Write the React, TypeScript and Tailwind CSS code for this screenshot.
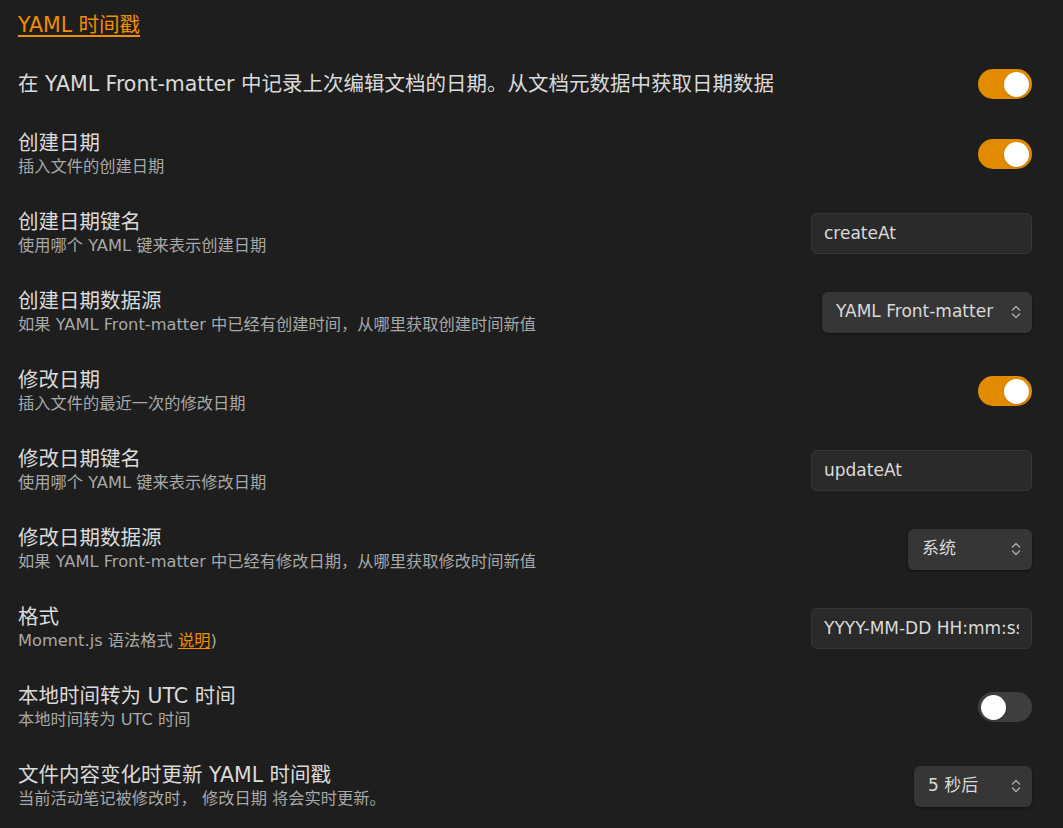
const font = "font-['DejaVu_Sans','Noto_Sans_CJK_SC',sans-serif]";

type Control =
  | { kind: "toggle"; on: boolean }
  | { kind: "input"; value: string }
  | { kind: "select"; value: string; width: string };

type Row = { name: string; desc?: React.ReactNode; control: Control };

const rows: Row[] = [
  {
    name: "在 YAML Front-matter 中记录上次编辑文档的日期。从文档元数据中获取日期数据",
    control: { kind: "toggle", on: true },
  },
  { name: "创建日期", desc: "插入文件的创建日期", control: { kind: "toggle", on: true } },
  { name: "创建日期键名", desc: "使用哪个 YAML 键来表示创建日期", control: { kind: "input", value: "createAt" } },
  {
    name: "创建日期数据源",
    desc: "如果 YAML Front-matter 中已经有创建时间，从哪里获取创建时间新值",
    control: { kind: "select", value: "YAML Front-matter", width: "w-[210px]" },
  },
  { name: "修改日期", desc: "插入文件的最近一次的修改日期", control: { kind: "toggle", on: true } },
  { name: "修改日期键名", desc: "使用哪个 YAML 键来表示修改日期", control: { kind: "input", value: "updateAt" } },
  {
    name: "修改日期数据源",
    desc: "如果 YAML Front-matter 中已经有修改日期，从哪里获取修改时间新值",
    control: { kind: "select", value: "系统", width: "w-[124px]" },
  },
  {
    name: "格式",
    desc: (
      <>
        Moment.js 语法格式 <span className="text-[#f28c00] underline underline-offset-2">说明</span>)
      </>
    ),
    control: { kind: "input", value: "YYYY-MM-DD HH:mm:ss" },
  },
  { name: "本地时间转为 UTC 时间", desc: "本地时间转为 UTC 时间", control: { kind: "toggle", on: false } },
  {
    name: "文件内容变化时更新 YAML 时间戳",
    desc: "当前活动笔记被修改时， 修改日期 将会实时更新。",
    control: { kind: "select", value: "5 秒后", width: "w-[118px]" },
  },
];

function Toggle({ on }: { on: boolean }) {
  return (
    <div
      className={`flex h-[30px] w-[54px] shrink-0 items-center rounded-full px-[3px] ${
        on ? "justify-end bg-[#e38b00]" : "justify-start bg-[#3f3f3f]"
      }`}
    >
      <div className="size-[25px] rounded-full bg-white shadow-sm" />
    </div>
  );
}

function UpDown() {
  return (
    <svg width="10" height="14" viewBox="0 0 10 14" fill="none" stroke="#a8a8a8" strokeWidth="1.5" strokeLinecap="round" strokeLinejoin="round">
      <polyline points="1.5,5 5,1.5 8.5,5" />
      <polyline points="1.5,9 5,12.5 8.5,9" />
    </svg>
  );
}

function ControlView({ c }: { c: Control }) {
  if (c.kind === "toggle") return <Toggle on={c.on} />;
  if (c.kind === "input")
    return (
      <input
        readOnly
        value={c.value}
        className={`h-[41px] w-[221px] shrink-0 rounded-[6px] border border-[#363636] bg-[#2a2a2a] px-3 text-[17px] text-[#dadada] outline-none ${font}`}
      />
    );
  return (
    <div
      className={`flex h-[41px] ${c.width} shrink-0 items-center justify-between rounded-[6px] bg-[#363636] pl-[14px] pr-[11px] text-[17px] text-[#dadada] shadow-[0_1px_3px_rgba(0,0,0,0.45)]`}
    >
      <span className="whitespace-nowrap">{c.value}</span>
      <UpDown />
    </div>
  );
}

export default function App() {
  return (
    <div className={`min-h-[828px] bg-[#1e1e1e] pl-[18px] pr-[31px] ${font}`}>
      <div className="pb-[14px] pt-[11px]">
        <span className="text-[20.5px] leading-[28px] text-[#f28c00] underline underline-offset-[3px]">
          YAML 时间戳
        </span>
      </div>
      {rows.map((r, i) => (
        <div key={i} className="flex items-center justify-between gap-6 pb-[15px] pt-[16px]">
          <div className="flex flex-col">
            <div className={`text-[20.5px] ${r.desc ? "leading-[26px]" : "leading-[28px]"} text-[#dadada]`}>{r.name}</div>
            {r.desc && <div className="text-[16.25px] leading-[22px] text-[#a8a8a8]">{r.desc}</div>}
          </div>
          <ControlView c={r.control} />
        </div>
      ))}
    </div>
  );
}
